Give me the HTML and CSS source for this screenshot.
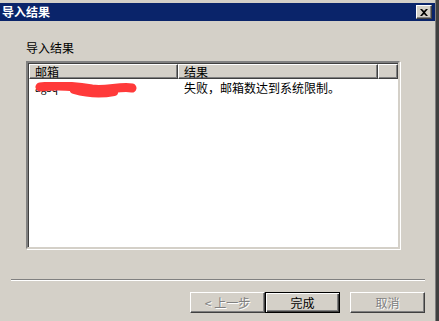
FILE: index.html
```html
<!DOCTYPE html>
<html lang="zh-CN">
<head>
    <meta charset="UTF-8">
    <meta name="viewport" content="width=device-width, initial-scale=1.0">
    <title>导入结果</title>
    <link rel="stylesheet" href="styles.css">
</head>
<body>
    <div class="window">
        <div class="titlebar">
            <span class="title">导入结果</span>
            <span class="close">
                <svg width="8" height="7" viewBox="0 0 8 7">
                    <path d="M0 0h2l2 2 2-2h2L5 3.5 8 7H6L4 5 2 7H0l3-3.5z" fill="#000"/>
                </svg>
            </span>
        </div>

        <div class="content">
            <div class="label">导入结果</div>
            <div class="listbox">
                <div class="header">
                    <div class="col col-mail">邮箱</div>
                    <div class="col col-result">结果</div>
                    <div class="col col-rest"></div>
                </div>
                <div class="row">
                    <div class="cell cell-mail">ag3q</div>
                    <div class="cell cell-result">失败，邮箱数达到系统限制。</div>
                    <!-- 涂掉的邮箱地址 -->
                    <svg class="scribble" width="104" height="18" viewBox="0 0 104 18">
                        <path d="M6 5 C22 3, 40 4, 58 7 C72 9, 86 4, 98 6" stroke="#ff3a3a" stroke-width="9" fill="none" stroke-linecap="round"/>
                        <path d="M40 8 C54 12, 66 13, 80 10" stroke="#ff3a3a" stroke-width="8" fill="none" stroke-linecap="round"/>
                    </svg>
                </div>
            </div>

            <div class="separator"></div>

            <div class="buttons">
                <button class="btn disabled">&lt; 上一步</button>
                <button class="btn default">完成</button>
                <button class="btn disabled cancel">取消</button>
            </div>
        </div>
    </div>
</body>
</html>
```

FILE: styles.css
```css
* {
    margin: 0;
    padding: 0;
    box-sizing: border-box;
}

body {
    width: 439px;
    height: 321px;
    overflow: hidden;
    background-color: #d4d0c8;
    font-family: "Noto Sans CJK SC", "Liberation Sans", sans-serif;
    font-size: 12px;
    color: #000;
}

.window {
    width: 439px;
    height: 321px;
    padding-top: 3px;
    border-right: 3px solid #404040;
    box-shadow: inset -1px 0 0 #808080;
    background-color: #d4d0c8;
}

.titlebar {
    display: flex;
    align-items: center;
    justify-content: space-between;
    width: 435px;
    height: 18px;
    padding: 0 3px 0 2px;
    background-color: #0a246a;
}

.title {
    color: #fff;
    font-weight: bold;
    font-size: 12px;
    line-height: 18px;
}

.close {
    display: flex;
    align-items: center;
    justify-content: center;
    width: 16px;
    height: 14px;
    background-color: #d4d0c8;
    border-top: 1px solid #fff;
    border-left: 1px solid #fff;
    border-right: 1px solid #404040;
    border-bottom: 1px solid #404040;
    box-shadow: inset -1px -1px 0 #808080;
}

.content {
    padding: 19px 11px 0 26px;
}

.label {
    line-height: 16px;
    margin-bottom: 5px;
}

.listbox {
    position: relative;
    width: 374px;
    height: 188px;
    background-color: #fff;
    border-top: 2px solid #808080;
    border-left: 2px solid #808080;
    border-right: 2px solid #d4d0c8;
    border-bottom: 2px solid #d4d0c8;
    box-shadow: inset 1px 1px 0 #404040, 1px 1px 0 #fff;
}

.header {
    display: flex;
    height: 15px;
    margin: 1px 0 0 1px;
}

.col {
    height: 15px;
    padding-left: 5px;
    line-height: 13px;
    background-color: #d4d0c8;
    border-top: 1px solid #fff;
    border-left: 1px solid #fff;
    border-bottom: 1px solid #404040;
    border-right: 1px solid #404040;
    box-shadow: inset -1px -1px 0 #808080;
}

.col-mail {
    width: 149px;
}

.col-result {
    width: 200px;
}

.col-rest {
    flex: 1;
}

.row {
    position: relative;
    display: flex;
    height: 14px;
    margin: 2px 0 0 1px;
    line-height: 14px;
}

.cell {
    padding-left: 6px;
}

.cell-mail {
    width: 149px;
    font-size: 10px;
}

.scribble {
    position: absolute;
    top: 1px;
    left: 5px;
}

.separator {
    width: 414px;
    height: 2px;
    margin: 30px 0 0 -15px;
    border-top: 1px solid #808080;
    border-bottom: 1px solid #fff;
}

.buttons {
    display: flex;
    justify-content: flex-end;
    margin-top: 11px;
}

.btn {
    width: 75px;
    height: 21px;
    font-family: inherit;
    font-size: 12px;
    line-height: 17px;
    background-color: #d4d0c8;
    border-top: 1px solid #fff;
    border-left: 1px solid #fff;
    border-right: 1px solid #404040;
    border-bottom: 1px solid #404040;
    box-shadow: inset -1px -1px 0 #808080;
}

.btn.disabled {
    color: #808080;
    text-shadow: 1px 1px 0 #fff;
}

.btn.default {
    border: 1px solid #000;
    box-shadow: inset 1px 1px 0 #fff, inset -1px -1px 0 #404040, inset -2px -2px 0 #808080;
}

.btn.cancel {
    margin-left: 10px;
}
```
